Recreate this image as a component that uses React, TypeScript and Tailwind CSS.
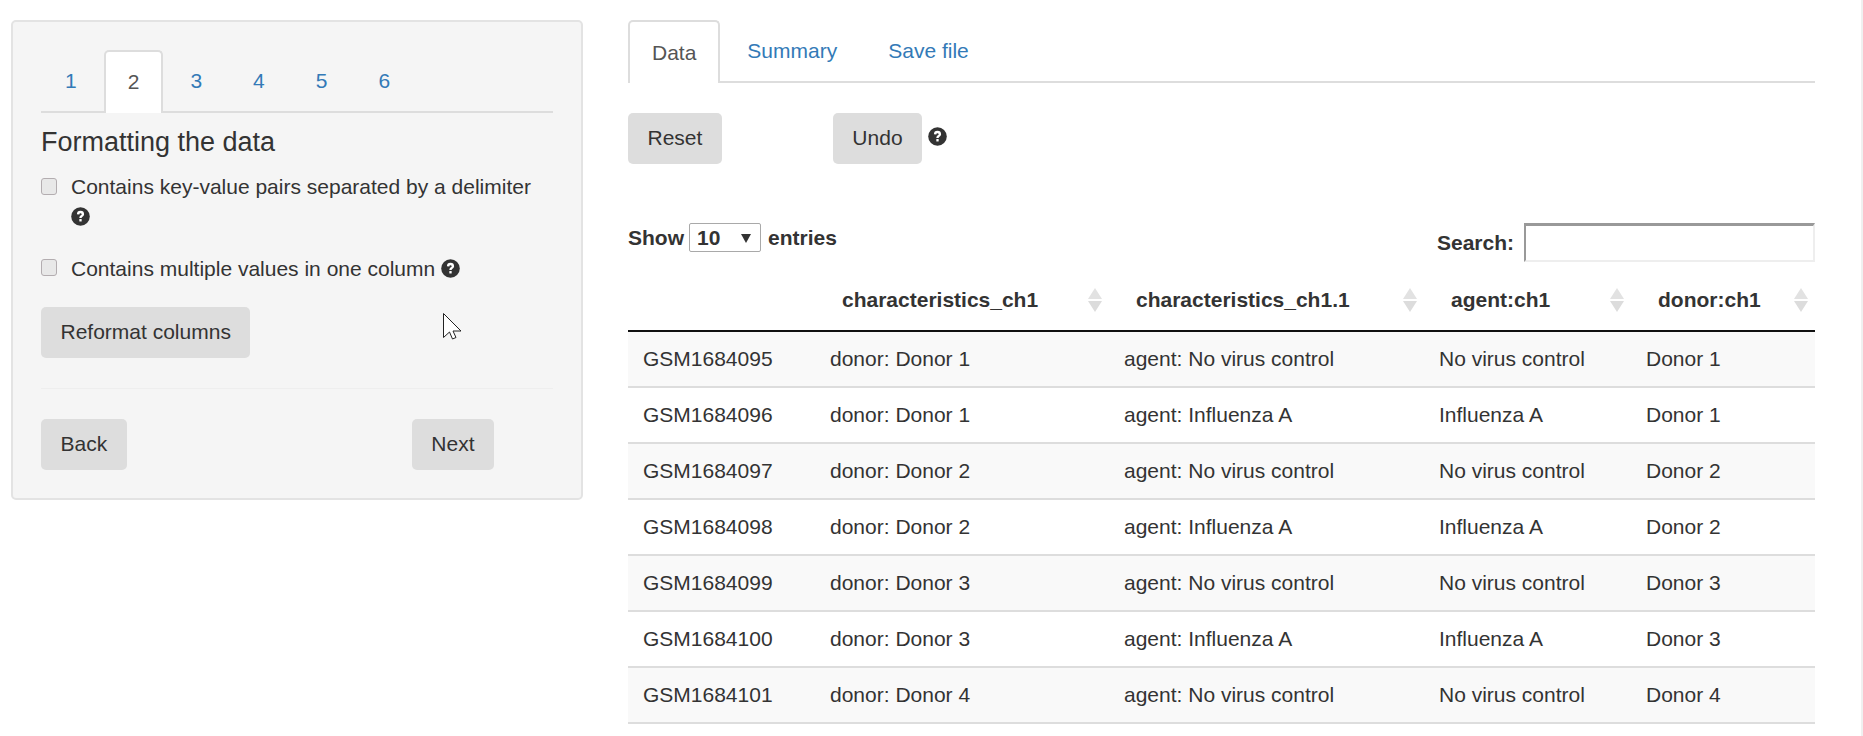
const rows = [
  ['GSM1684095', 'donor: Donor 1', 'agent: No virus control', 'No virus control', 'Donor 1'],
  ['GSM1684096', 'donor: Donor 1', 'agent: Influenza A', 'Influenza A', 'Donor 1'],
  ['GSM1684097', 'donor: Donor 2', 'agent: No virus control', 'No virus control', 'Donor 2'],
  ['GSM1684098', 'donor: Donor 2', 'agent: Influenza A', 'Influenza A', 'Donor 2'],
  ['GSM1684099', 'donor: Donor 3', 'agent: No virus control', 'No virus control', 'Donor 3'],
  ['GSM1684100', 'donor: Donor 3', 'agent: Influenza A', 'Influenza A', 'Donor 3'],
  ['GSM1684101', 'donor: Donor 4', 'agent: No virus control', 'No virus control', 'Donor 4'],
]

function Help() {
  return (
    <svg viewBox="0 0 18 18" className="inline-block w-[19px] h-[19px] align-[-2px]">
      <circle cx="9" cy="9" r="8.8" fill="#333" />
      <path d="M5.6 6.8a3.4 3.2 0 0 1 6.8 0c0 2.2-2.3 2.2-2.3 3.6H7.9c0-2.6 2.2-2.5 2.2-3.6a1.1 1 0 0 0-2.2.2Z" fill="#fff" />
      <rect x="7.9" y="11.4" width="2.2" height="2.3" fill="#fff" />
    </svg>
  )
}

function Sort() {
  return (
    <svg viewBox="0 0 14 24" className="w-[14px] h-6 shrink-0">
      <path d="M7 0l7 11H0Z" fill="#e2e2e2" />
      <path d="M7 24L0 13h14Z" fill="#dcdcdc" />
    </svg>
  )
}

function Btn({ children, className = '' }: { children: string; className?: string }) {
  return (
    <button className={`h-[51px] px-[19.5px] pb-[1px] rounded-[5px] bg-[#dddddd] text-[#333] ${className}`}>
      {children}
    </button>
  )
}

function Check() {
  return (
    <span className="w-[16px] h-[17px] mt-[6px] mr-[14px] shrink-0 rounded-[3px] border border-[#b3adb0] bg-[#e8e8e8]" />
  )
}

function Th({ w, label }: { w: string; label: string }) {
  return (
    <th className={`${w} font-bold`}>
      <div className="flex items-center justify-between pl-[27px] pr-[7px]">
        <span>{label}</span>
        <Sort />
      </div>
    </th>
  )
}

export default function App() {
  return (
    <div className="relative h-[736px] overflow-hidden bg-white text-[#333] text-[21px] flex font-['Liberation_Sans',Arial,sans-serif]">
      <div className="w-[628px] shrink-0 pl-[11px] pt-[20px]">
        <div className="w-[572px] h-[480px] rounded-[5px] border-2 border-[#e3e3e3] bg-[#f5f5f5] px-[28px] pt-[28px]">
          <div className="flex h-[63px] border-b-2 border-[#dddddd]">
            {['1', '2', '3', '4', '5', '6'].map((t) => (
              <div
                key={t}
                className={
                  t === '2'
                    ? 'w-[59.7px] h-[63px] mr-[3px] pb-[2px] flex items-center justify-center rounded-t-[5px] border-2 border-b-0 border-[#dddddd] bg-white text-[#555]'
                    : 'w-[59.7px] mr-[3px] flex items-center justify-center text-[#337ab7]'
                }
              >
                {t}
              </div>
            ))}
          </div>
          <h4 className="text-[27px] leading-[28px] mt-[15px] text-[#333]">Formatting the data</h4>
          <label className="flex mt-[16px] leading-[30px]">
            <Check />
            <span>
              Contains key-value pairs separated by a delimiter
              <br />
              <Help />
            </span>
          </label>
          <label className="flex mt-[21px] leading-[31px]">
            <Check />
            <span>
              Contains multiple values in one column <Help />
            </span>
          </label>
          <Btn className="mt-[23px] block">Reformat columns</Btn>
          <div className="border-t border-[#eeeeee] mt-[30px]" />
          <div className="flex mt-[30px] w-[453px] justify-between">
            <Btn>Back</Btn>
            <Btn>Next</Btn>
          </div>
        </div>
      </div>

      <div className="w-[1187px] shrink-0 pt-[20px]">
        <div className="flex h-[63px] border-b-2 border-[#dddddd]">
          <div className="h-[63px] px-[22px] mr-[3px] flex items-center justify-center rounded-t-[5px] border-2 border-b-0 border-[#dddddd] bg-white text-[#555]">
            Data
          </div>
          <div className="px-[24px] mr-[3px] flex items-center text-[#337ab7]">Summary</div>
          <div className="px-[24px] flex items-center text-[#337ab7]">Save file</div>
        </div>
        <div className="flex mt-[30px]">
          <Btn>Reset</Btn>
          <Btn className="ml-[111px]">Undo</Btn>
          <span className="ml-[6px] mt-[8px]"><Help /></span>
        </div>
        <div className="flex justify-between items-start mt-[59px] font-bold">
          <div className="flex items-center h-[29px]">
            Show
            <span className="w-[72px] h-[29px] ml-[5px] mr-[7px] border border-[#a9a9a9] rounded-[2px] flex items-center justify-between pl-[7px] pr-[9px]">
              10
              <svg viewBox="0 0 10 10" className="w-[10px] h-[10px]">
                <path d="M0 1h10L5 10Z" fill="#333" />
              </svg>
            </span>
            entries
          </div>
          <div className="flex items-center gap-[10px]">
            Search:
            <span className="w-[291px] h-[39px] border-2 border-t-[3px] border-[#eeeeee] border-t-[#999999] border-l-[#999999]" />
          </div>
        </div>
        <table className="w-full table-fixed border-collapse mt-[8px]">
          <thead>
            <tr className="h-[61px] border-b-2 border-[#111111]">
              <th className="w-[187px]" />
              <Th w="w-[294px]" label="characteristics_ch1" />
              <Th w="w-[315px]" label="characteristics_ch1.1" />
              <Th w="w-[207px]" label="agent:ch1" />
              <Th w="w-[184px]" label="donor:ch1" />
            </tr>
          </thead>
          <tbody>
            {rows.map((r, i) => (
              <tr key={r[0]} className={`h-[56px] border-b-2 border-[#dddddd] ${i % 2 === 0 ? 'bg-[#f9f9f9]' : 'bg-white'}`}>
                {r.map((c) => (
                  <td key={c} className="pl-[15px]">{c}</td>
                ))}
              </tr>
            ))}
          </tbody>
        </table>
      </div>
      <div className="ml-auto w-[2px] bg-[#f0f0f0]" />

      {/* mouse pointer caught in the shot */}
      <svg viewBox="0 0 20 28" className="absolute left-[443px] top-[313px] w-[20px] h-[28px]">
        <path d="M.5.5v24l6-5.5 3 7 3.5-1.5-3-6.5h8Z" fill="#fff" stroke="#222" strokeWidth="1" />
      </svg>
    </div>
  )
}
